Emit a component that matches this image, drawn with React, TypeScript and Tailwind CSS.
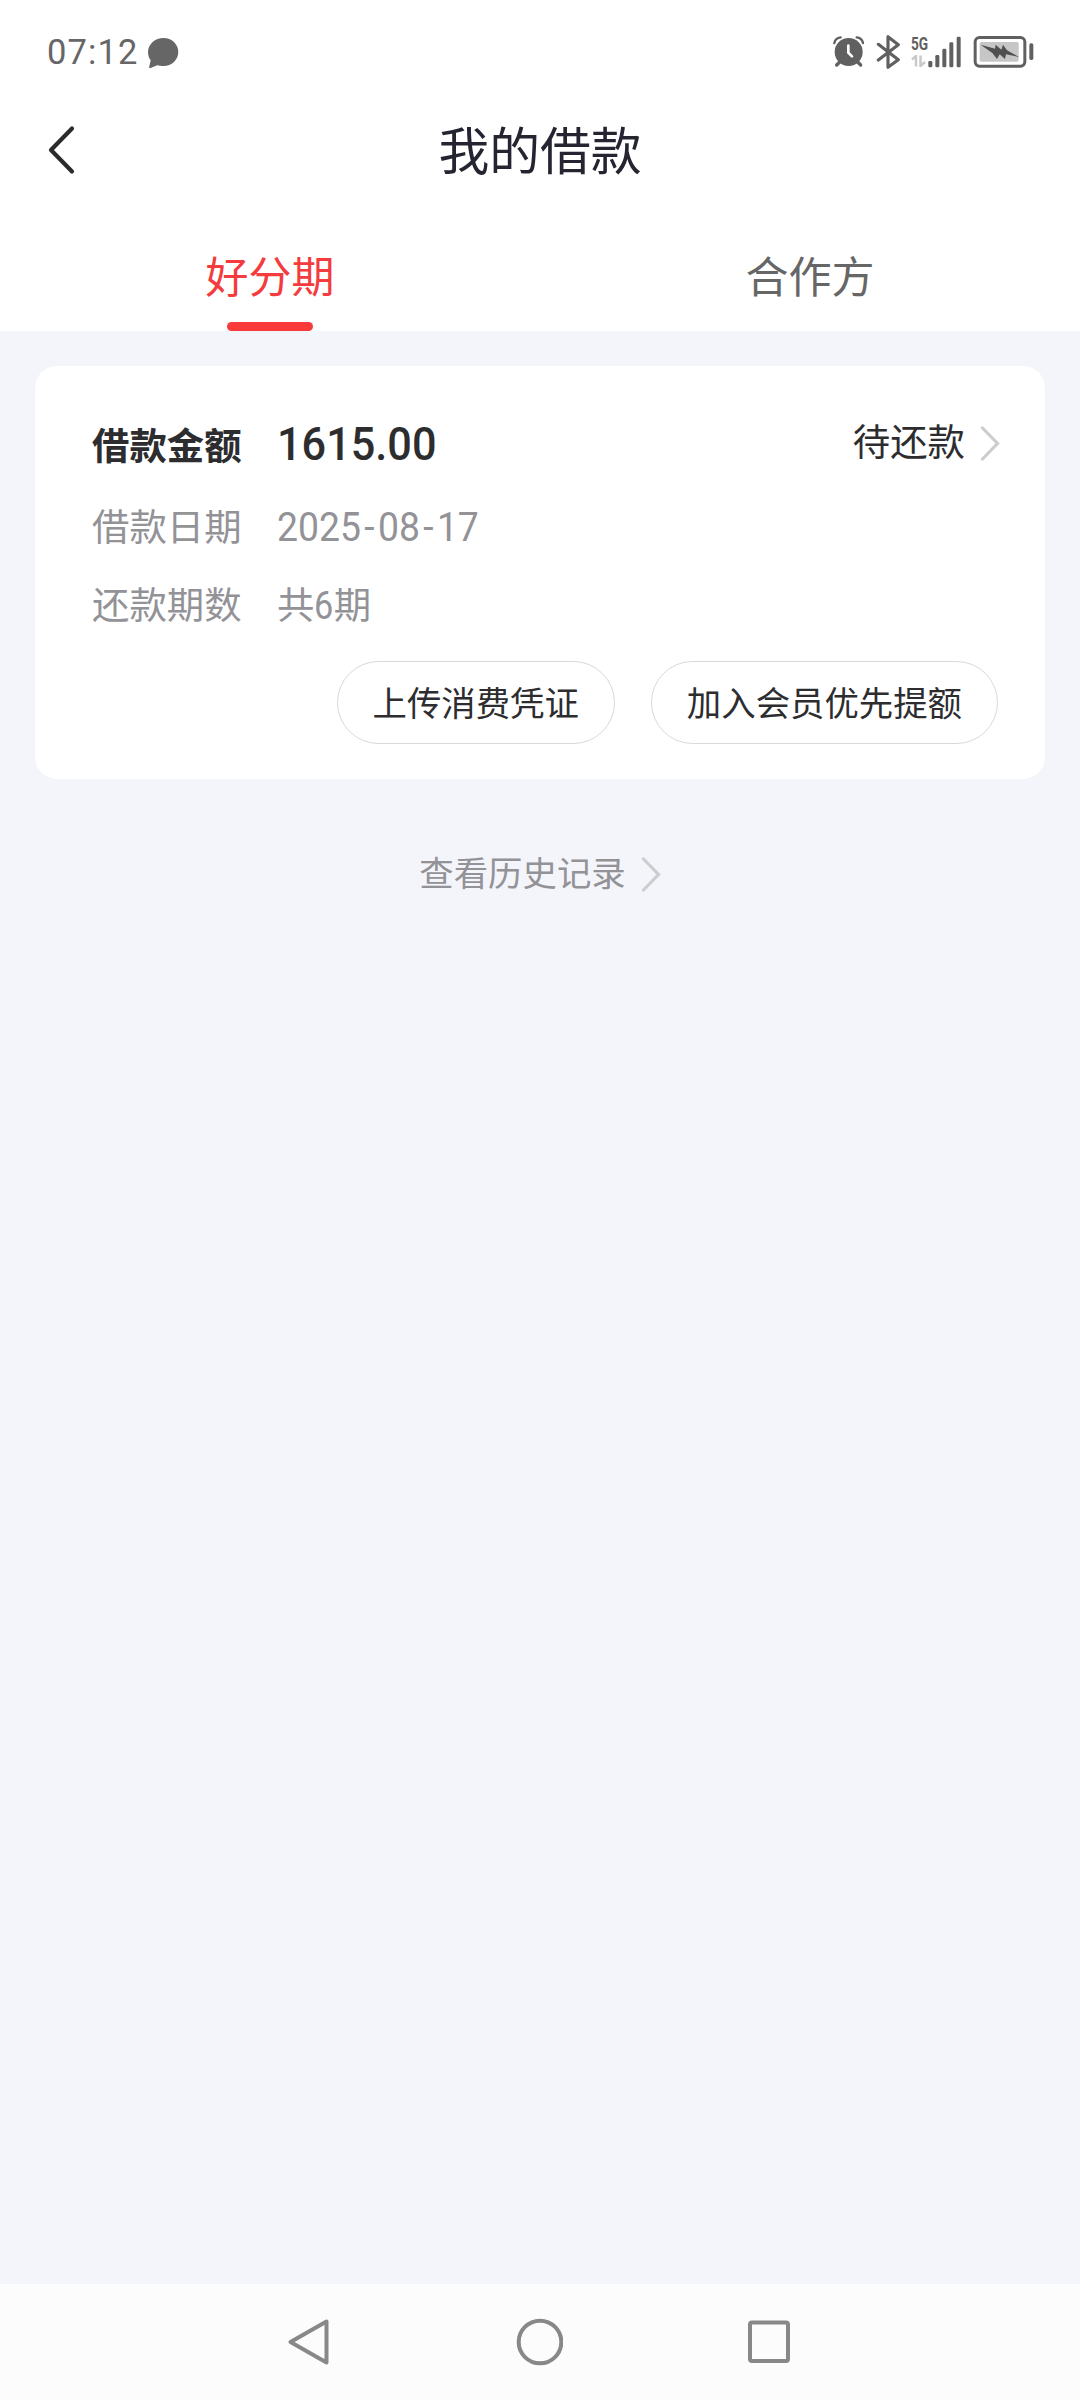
import { ReactNode } from 'react';

const tabs = [
  { name: '好分期', active: true },
  { name: '合作方', active: false },
];

const actions = ['上传消费凭证', '加入会员优先提额'];

function Chevron() {
  return (
    <svg className="shrink-0" width="20" height="36" viewBox="0 0 20 36" fill="none" stroke="#cdcdcf" strokeWidth="3.2" strokeLinecap="round">
      <path d="M2.5 3L17.5 18.5L2.5 34" />
    </svg>
  );
}

function StatusBar() {
  return (
    <div className="flex h-[104px] items-center justify-between pl-[47px] pr-[46px]">
      <div className="flex items-center">
        <span className="pt-[1px] font-['Roboto',sans-serif] text-[34.5px] leading-none tracking-[1.1px] text-[#666]">07:12</span>
        <svg className="ml-[9px] mt-[2px]" width="32" height="32" viewBox="0 0 32 32" fill="#666">
          <path d="M16.5 1C24.8 1 31.3 7.2 31.3 15S24.8 29 16.5 29C14.2 29 12 28.5 10.2 28.2L3.6 31C2.6 31.4 1.9 30.7 2.2 29.7L3.7 23.3C1.9 21 1 18.2 1 15C1 7.2 8.2 1 16.5 1Z" />
        </svg>
      </div>
      <div className="flex items-center">
        <svg width="31" height="32" viewBox="67 48 93 96" fill="none" stroke="#606060" strokeLinecap="round">
          <circle cx="114" cy="96" r="42" fill="#606060" stroke="none" />
          <path d="M71 69C73 59 81 53 90 52M157 69C155 59 147 53 138 52" strokeWidth="7" />
          <path d="M87 126L78 135M141 126L150 135" strokeWidth="10" />
          <path d="M113 77V98L124 109" stroke="#fff" strokeWidth="8" />
        </svg>
        <svg className="ml-[12px]" width="25" height="34" viewBox="197 46 75 102" fill="none" stroke="#606060" strokeWidth="9.5" strokeLinejoin="round" strokeLinecap="round">
          <path d="M204 74L264 120L233 143V51L264 75L204 121" />
        </svg>
        <div className="ml-[10px] flex h-[34px] w-[50px] items-end justify-between">
          <div className="flex h-full w-[17px] flex-col justify-between pb-[2px]">
            <span className="origin-left scale-x-[0.76] font-['Roboto',sans-serif] text-[18px] font-bold leading-[18px] text-[#606060]">5G</span>
            <svg width="15" height="12" viewBox="0 0 15 12" fill="none" stroke="#c9c9c9" strokeWidth="2.5">
              <path d="M1 4.5L5 1V11.5M9.5 0.5V11L14 7" />
            </svg>
          </div>
          <svg width="33" height="33" viewBox="356 48 99 99" fill="#606060">
            <rect x="357" y="123" width="12" height="19" rx="4" />
            <rect x="378" y="105" width="12" height="37" rx="4" />
            <rect x="399" y="86" width="12" height="56" rx="4" />
            <rect x="420" y="67" width="12" height="75" rx="4" />
            <rect x="442" y="50" width="12" height="92" rx="4" />
          </svg>
        </div>
        <svg className="ml-[12px]" width="61" height="34" viewBox="490 47 183 102">
          <rect x="496.5" y="54.5" width="149" height="86" rx="13" fill="none" stroke="#606060" strokeWidth="9" />
          <rect x="510" y="68" width="117" height="59" rx="5" fill="#c6c6c6" />
          <rect x="659" y="72" width="12" height="50" rx="5" fill="#606060" />
          <path d="M513 76L556 88L558 76L575 91L580 76L592 93L628 113L589 105L586 119L570 105L562 119L548 101Z" fill="#505050" />
        </svg>
      </div>
    </div>
  );
}

function Row({ label, children }: { label: string; children: ReactNode }) {
  return (
    <div className="flex h-[54px] items-center text-[#929297]">
      <span className="w-[185px]">{label}</span>
      {children}
    </div>
  );
}

function LoanCard() {
  return (
    <div className="mx-[35px] mt-[35px] h-[413px] rounded-[22px] bg-white pl-[57px] pr-[45px] text-[37.4px] leading-[54px]">
      <div className="flex items-start justify-between pt-[48px] text-[#2d2d2f]">
        <div className="flex items-center">
          <span className="w-[185px] pt-[3px] font-bold">借款金额</span>
          <span className="mt-[2px] origin-left scale-x-[0.94] font-['Roboto',sans-serif] text-[46px] font-medium">1615.00</span>
        </div>
        <div className="-mt-[1px] flex items-center">
          <span>待还款</span>
          <span className="ml-[15px] mt-[5px]">
            <Chevron />
          </span>
        </div>
      </div>
      <div className="mt-[27px] flex flex-col gap-[24px]">
        <Row label="借款日期">
          <span className="mt-[3px] origin-left scale-x-[0.91] font-['Roboto',sans-serif] text-[41px]">
            2025<span className="mx-[3.7px]">-</span>08<span className="mx-[3.7px]">-</span>17
          </span>
        </Row>
        <Row label="还款期数">
          <span>
            共<span className="-mx-[1px] inline-block scale-x-[0.9] font-['Roboto',sans-serif] text-[38px] leading-none">6</span>期
          </span>
        </Row>
      </div>
      <div className="mt-[31px] flex justify-end gap-[36px] pr-[2px]">
        {actions.map((a) => (
          <button key={a} className="h-[83px] rounded-full border border-[#d9d9dc] px-[35px] pb-[3px] text-[34.4px] leading-none text-[#2d2d2f]">
            {a}
          </button>
        ))}
      </div>
    </div>
  );
}

function NavBar() {
  return (
    <div className="flex h-[116px] items-center justify-between bg-[#fcfcfc] pl-[287px] pr-[289px]">
      <svg width="44" height="48" viewBox="0 0 44 48" fill="none" stroke="#888" strokeWidth="4" strokeLinejoin="round">
        <path d="M39.5 3.5V44.5L3.5 24Z" />
      </svg>
      <svg width="48" height="48" viewBox="0 0 48 48" fill="none" stroke="#888" strokeWidth="4">
        <circle cx="25" cy="24" r="21.3" />
      </svg>
      <svg width="44" height="44" viewBox="0 0 44 44" fill="none" stroke="#888" strokeWidth="4">
        <rect x="3" y="2.5" width="38" height="38.5" rx="2" />
      </svg>
    </div>
  );
}

export default function App() {
  return (
    <div className="flex h-[2400px] w-[1080px] flex-col bg-[#f4f5fa] font-['Noto_Sans_CJK_SC',sans-serif]">
      <div className="bg-white">
        <StatusBar />
        <div className="grid h-[92px] grid-cols-[1fr_auto_1fr] items-center">
          <svg className="ml-[47px]" width="30" height="50" viewBox="0 0 30 50" fill="none" stroke="#2b2b2d" strokeWidth="4.2" strokeLinecap="round" strokeLinejoin="round">
            <path d="M25 3.5L4 25L25 46.5" />
          </svg>
          <h1 className="pb-[3px] text-[50.8px] leading-none text-[#252532]">我的借款</h1>
        </div>
        <div className="grid h-[135px] grid-cols-2">
          {tabs.map((t) => (
            <div key={t.name} className={`flex flex-col items-center justify-between pt-[48px] text-[43px] leading-[60px] ${t.active ? 'text-[#f43b3d]' : 'text-[#666]'}`}>
              {t.name}
              {t.active && <div className="h-[9px] w-[86px] rounded-full bg-[#fa393a]" />}
            </div>
          ))}
        </div>
      </div>
      <LoanCard />
      <div className="mt-[67px] flex items-center justify-center text-[34.4px] leading-[50px] text-[#929297]">
        查看历史记录
        <span className="ml-[15px] mt-[6px]">
          <Chevron />
        </span>
      </div>
      <div className="flex-1" />
      <NavBar />
    </div>
  );
}
